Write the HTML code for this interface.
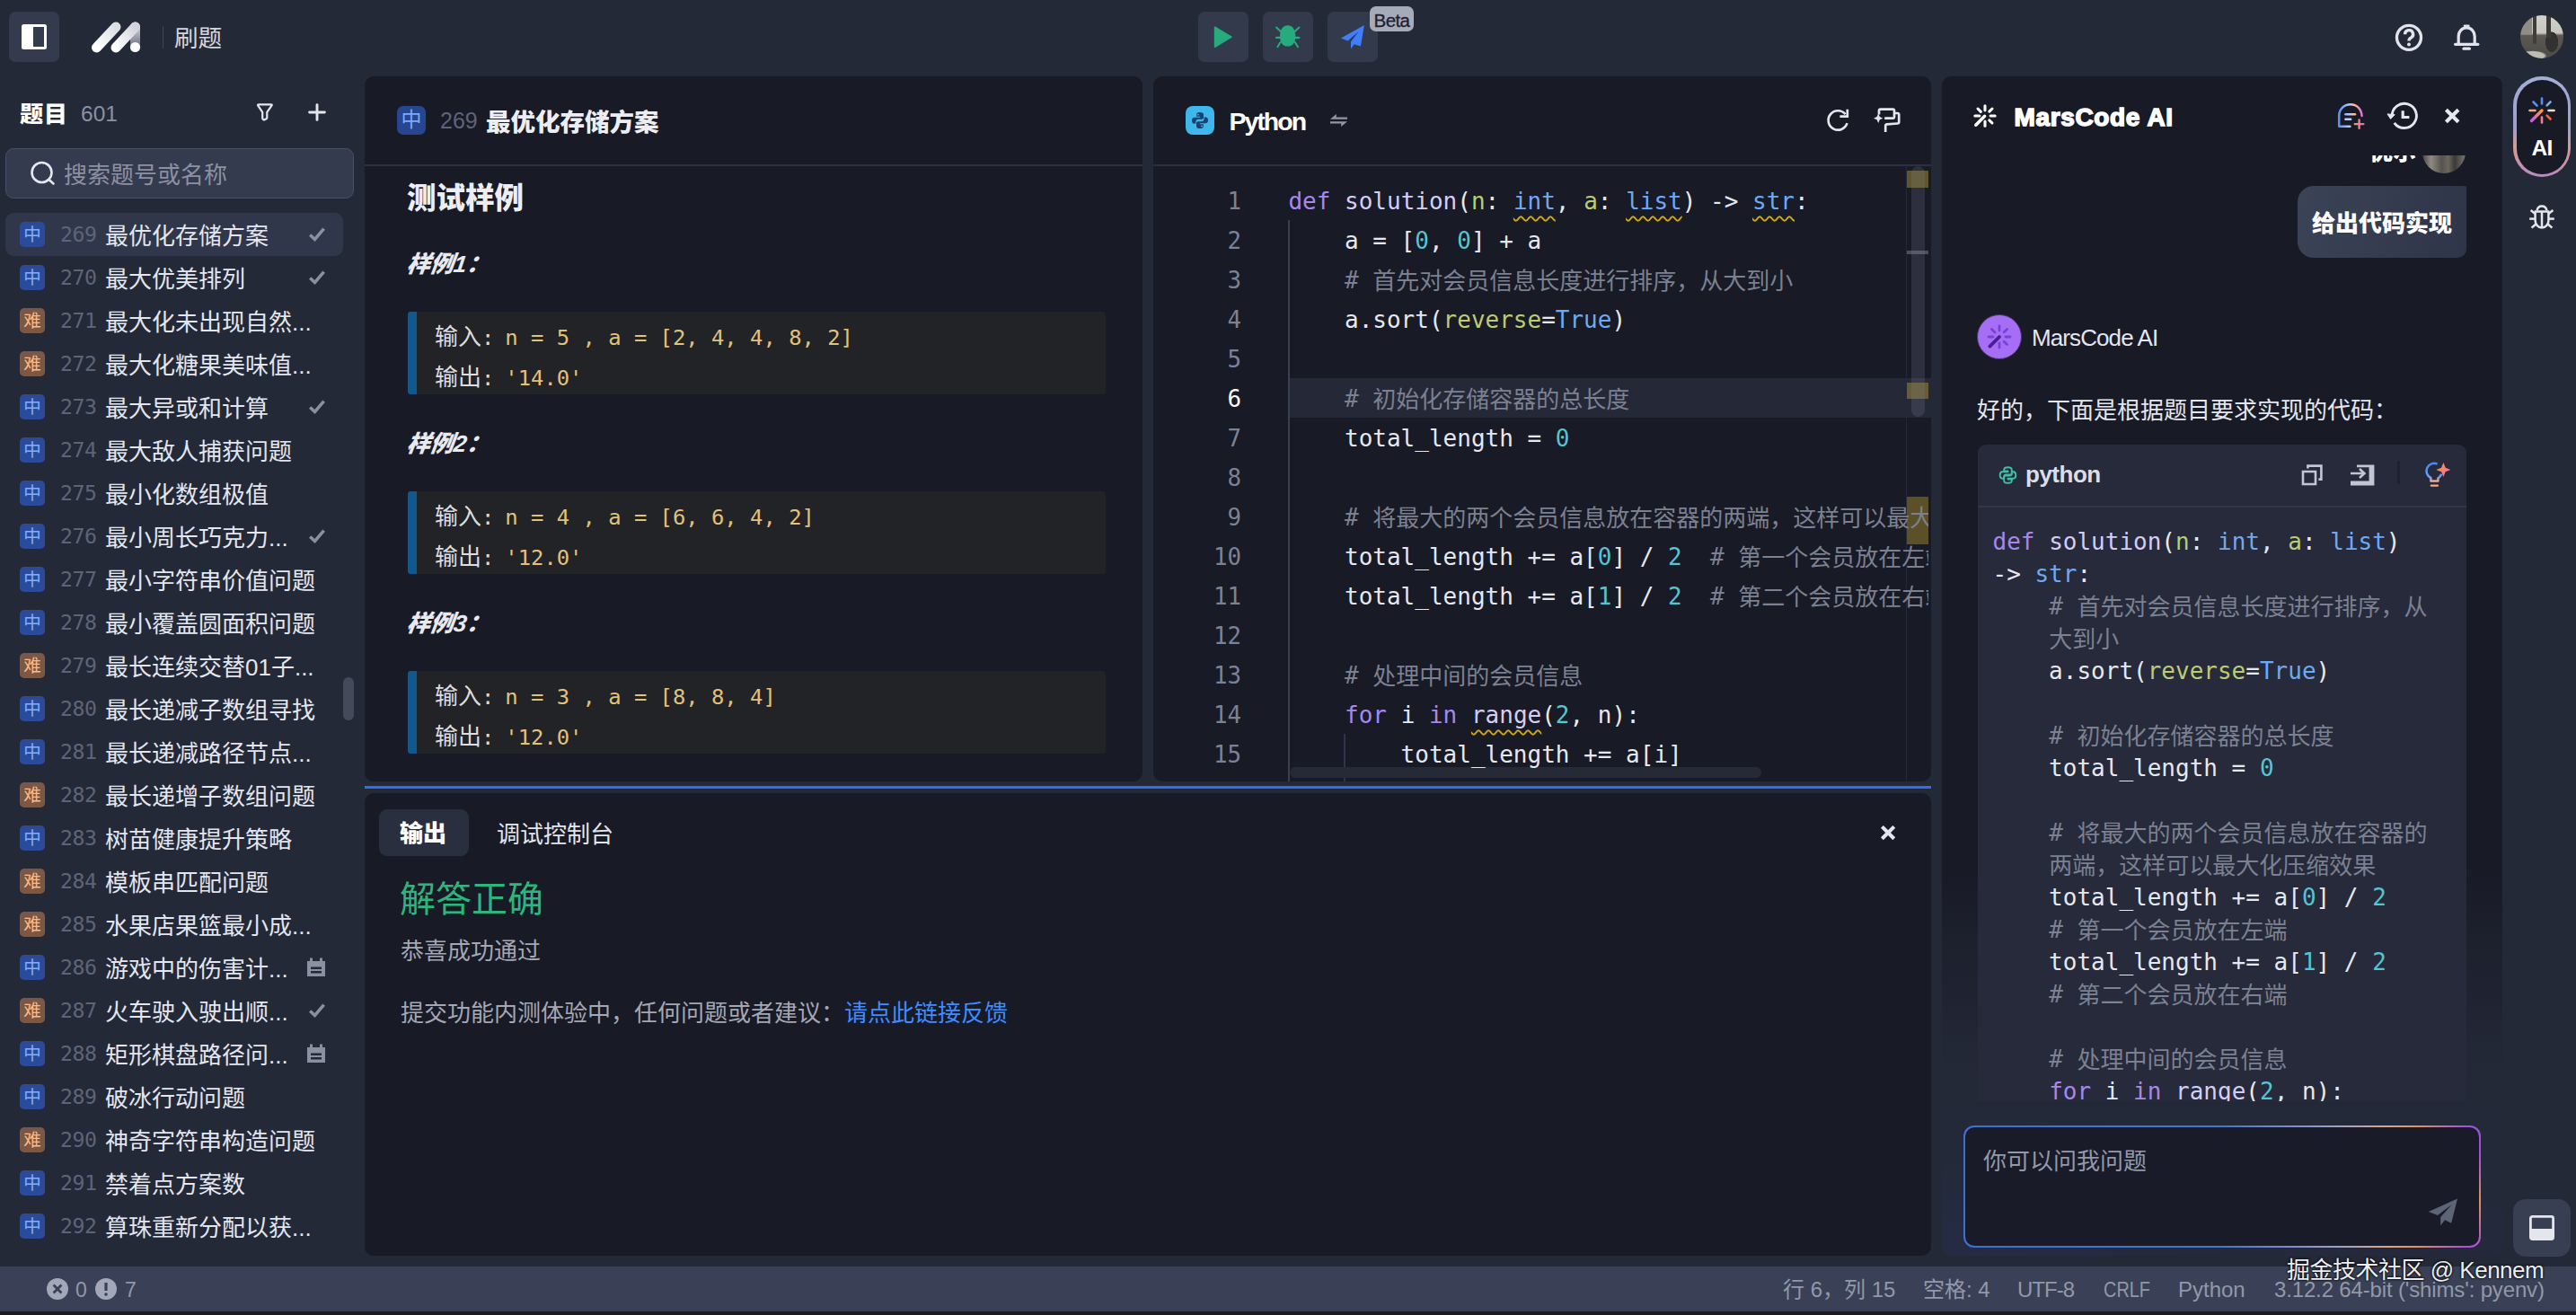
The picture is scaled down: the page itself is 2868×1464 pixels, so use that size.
<!DOCTYPE html>
<html lang="zh-CN">
<head>
<meta charset="utf-8">
<title>MarsCode 刷题</title>
<style>
*{box-sizing:border-box;margin:0;padding:0}
html,body{width:2868px;height:1464px;overflow:hidden;background:#242938}
body{position:relative;font-family:"Liberation Sans","Noto Sans CJK SC",sans-serif;color:#e3e6ee;font-size:26px}
.abs{position:absolute}
svg{position:absolute;overflow:visible}
.panel{position:absolute;background:#181a26;border-radius:10px;overflow:hidden}
.btn{position:absolute;width:56px;height:56px;border-radius:7px;background:#323a4c}
/* sidebar */
.row{position:absolute;left:6px;width:376px;height:48px;border-radius:9px}
.row.sel{background:#31374a}
.bd{position:absolute;left:16px;top:10px;width:28px;height:28px;border-radius:5px;font-size:19.5px;line-height:28.5px;text-align:center}
.bm{background:#2b4a99;color:#7fb0ff}
.bh{background:#7b5745;color:#ffb988}
.no{position:absolute;left:61px;top:0;line-height:47px;font-family:"DejaVu Sans Mono","Liberation Mono",monospace;font-size:23.2px;color:#5d6479;letter-spacing:-0.4px}
.tt{position:absolute;left:111px;top:0;line-height:53px;font-size:26px;color:#e3e6ee;white-space:nowrap}
.rk{left:338px;top:16px;width:18px;height:18px}
/* problem */
.sl{position:absolute;left:45px;font-size:26px;font-weight:900;font-style:italic;color:#e8eaf0;line-height:32px;transform:skewX(-8deg);transform-origin:left bottom}
.sb{position:absolute;left:48px;width:777px;height:92px;background:#222326;border-left:10px solid #12578d;border-radius:3px;padding:7px 0 0 20px;font-size:26px;line-height:43.5px;color:#dcdde0;font-family:"DejaVu Sans Mono","Liberation Mono","Noto Sans CJK SC",monospace;white-space:pre}
.sb div{font-size:26px}
.sb .y,.sb .m{font-size:23.85px}
.sb .m{letter-spacing:-1.2px}
.sb .y{color:#e2c17a}
/* editor */
.mono{font-family:"Liberation Mono","Noto Sans CJK SC",monospace}
.ln{position:absolute;left:0;width:98px;text-align:right;height:44px;line-height:44px;font-size:25.8px;color:#7b8295;font-family:"DejaVu Sans Mono","Liberation Mono",monospace}
.ln.cur{color:#ffffff}
.cl{position:absolute;left:150.4px;height:44px;line-height:44px;font-size:26px;white-space:pre;color:#e6e8ef;font-family:"DejaVu Sans Mono","Liberation Mono","Noto Sans CJK SC",monospace}
.al{position:absolute;left:56.5px;height:36px;line-height:36px;font-size:26px;white-space:pre;color:#e6e8ef;font-family:"DejaVu Sans Mono","Liberation Mono","Noto Sans CJK SC",monospace}
.k{color:#a688ee}.f{color:#d6cdf7}.p{color:#bccb74}.t{color:#6fa9f3}.n{color:#55c4d3}.c{color:#7b8191}
.cj{font-size:26px;position:relative;top:1.4px}
.w{text-decoration:underline wavy #cfa90f;text-decoration-thickness:2px;text-underline-offset:7px;text-decoration-skip-ink:none}
.st{position:absolute;top:0;height:50px;line-height:52px;font-size:24px;color:#9198a9;white-space:nowrap}
</style>
</head>
<body>

<!-- ================= TOP BAR ================= -->
<div class="btn" style="left:10px;top:13px;background:#343b4e"></div>
<svg style="left:24px;top:27px" width="28" height="28" viewBox="0 0 28 28"><rect x="0" y="0" width="28" height="28" rx="2.5" fill="#ffffff"/><rect x="13" y="3" width="12" height="22" fill="#343b4e"/></svg>
<svg style="left:100px;top:22px" width="60" height="40" viewBox="100 22 60 40">
<defs>
<linearGradient id="lg1" x1="0" y1="1" x2="1" y2="0"><stop offset="0" stop-color="#ffffff"/><stop offset="1" stop-color="#dcdee4"/></linearGradient>
<linearGradient id="lg2" x1="0" y1="1" x2="1" y2="0"><stop offset="0" stop-color="#ffffff"/><stop offset="1" stop-color="#d2d4db"/></linearGradient>
<linearGradient id="lg3" gradientUnits="userSpaceOnUse" x1="0" y1="26" x2="0" y2="54"><stop offset="0" stop-color="#e2e3e8"/><stop offset="0.35" stop-color="#b4b7c0"/><stop offset="1" stop-color="#666a77"/></linearGradient>
</defs>
<path d="M150.5 30 L150.5 52" stroke="url(#lg3)" stroke-width="11" stroke-linecap="round"/>
<path d="M107.5 53 L129 30" stroke="url(#lg1)" stroke-width="11" stroke-linecap="round"/>
<path d="M129 53 L150.5 30" stroke="url(#lg2)" stroke-width="11" stroke-linecap="round"/>
<circle cx="150.5" cy="52.5" r="5.6" fill="#ffffff"/>
</svg>
<div class="abs" style="left:181px;top:29px;width:1px;height:25px;background:#3e4559"></div>
<div class="abs" style="left:194px;top:23px;line-height:40px;font-size:26.6px;color:#d3d6df">刷题</div>

<div class="btn" style="left:1334px;top:13px"></div>
<div class="btn" style="left:1406px;top:13px"></div>
<div class="btn" style="left:1478px;top:13px"></div>
<svg style="left:1350px;top:28px" width="24" height="26" viewBox="1350 28 24 26"><path d="M1352.6 30.2 L1371 41.1 L1352.6 52.2 Z" fill="#26ab7c" stroke="#26ab7c" stroke-width="1.6" stroke-linejoin="round"/></svg>
<svg style="left:1418px;top:26px" width="32" height="30" viewBox="1418 26 32 30"><g fill="none" stroke="#26ab7c" stroke-width="2.1" stroke-linecap="round"><path d="M1421 30.6 L1427.4 36.6"/><path d="M1446.4 30.6 L1440 36.6"/><path d="M1421 41.9 H1426"/><path d="M1441.4 41.9 H1446.4"/><path d="M1425.6 47 L1422.4 52.2"/><path d="M1441.8 47 L1445 52.2"/></g><path d="M1433.7 28.2 C1429.2 28.2 1426.6 31.4 1425.6 35.6 C1424.6 39.6 1424.8 44 1426.4 47.2 C1427.9 50.2 1430.4 51.6 1433.7 51.6 C1437 51.6 1439.5 50.2 1441 47.2 C1442.6 44 1442.8 39.6 1441.8 35.6 C1440.8 31.4 1438.2 28.2 1433.7 28.2 Z" fill="#26ab7c"/></svg>
<svg style="left:1492px;top:27px" width="28" height="28" viewBox="1492 27 28 28"><path d="M1518.9 27.9 L1493 42.4 L1500.6 45.6 L1512.6 35 L1504 46.6 L1504 54.4 L1507.6 49.3 L1514.9 51.4 Z" fill="#3f7fff"/></svg>
<div class="abs" style="left:1525px;top:7px;width:49px;height:28px;border-radius:7px;background:#a7abb8;color:#1c2030;font-size:20.5px;line-height:31px;text-align:center;letter-spacing:-0.6px;-webkit-text-stroke:0.3px #1c2030">Beta</div>
<svg style="left:2660px;top:20px" width="110" height="44" viewBox="2660 20 110 44"><g fill="none" stroke="#e2e4ec" stroke-linecap="round" stroke-linejoin="round">
<circle cx="2682" cy="41.8" r="13.5" stroke-width="3.3"/>
<path d="M2677.6 38.2 A4.5 4.5 0 1 1 2684 42.2 Q2682 43.2 2682 45.4" stroke-width="3.4" stroke-linecap="butt"/>
<path d="M2737.2 49.3 V40.4 A9 9.6 0 0 1 2755.2 40.4 V49.3" stroke-width="3.2" stroke-linecap="butt"/>
<path d="M2733.6 49.3 H2758.8" stroke-width="3.2"/>
<path d="M2744 28.8 H2748.4" stroke-width="2.6"/>
<path d="M2743 54.2 H2749.4" stroke-width="3.2"/>
</g><circle cx="2682" cy="49.6" r="2" fill="#e2e4ec"/></svg>
<div class="abs" style="left:2806px;top:17px;width:48px;height:48px;border-radius:50%;overflow:hidden;background:
linear-gradient(90deg,rgba(0,0,0,0) 29%,#403e3a 29%,#403e3a 38%,rgba(0,0,0,0) 38%) 0 0/100% 66% no-repeat,
linear-gradient(90deg,rgba(0,0,0,0) 61%,#3b3936 61%,#3b3936 70%,rgba(0,0,0,0) 70%) 0 0/100% 52% no-repeat,
radial-gradient(ellipse 15% 24% at 73% 62%,#343230 0,#343230 96%,rgba(0,0,0,0) 100%),
radial-gradient(ellipse 34% 12% at 28% 94%,#bdbdb5 0,#bdbdb5 80%,rgba(0,0,0,0) 100%),
linear-gradient(90deg,#8f8d86 0,#8f8d86 27%,rgba(0,0,0,0) 27%) 0 0/100% 44% no-repeat,
linear-gradient(180deg,#d2d2ca 0%,#c6c6be 41%,#5c5953 47%,#4c4a45 100%)"></div>

<!-- ================= SIDEBAR ================= -->
<div class="abs" style="left:22px;top:108px;line-height:38px;font-size:25px;font-weight:900;color:#ffffff;letter-spacing:0.4px;transform:scaleX(1.05);transform-origin:left center">题目</div>
<div class="abs" style="left:90px;top:108px;line-height:38px;font-size:24.5px;color:#8b91a2">601</div>
<svg style="left:285px;top:114px" width="20" height="21" viewBox="0 0 20 21"><path d="M3 2.3 H16.8 Q18.4 2.3 17.4 3.7 L12.3 10.8 V17 Q12.3 17.8 11.6 18.2 L9.6 19.3 Q8.8 19.7 8.2 19.1 L7.6 18.5 Q7.2 18.1 7.2 17.4 V10.8 L2.3 3.7 Q1.4 2.3 3 2.3 Z" fill="none" stroke="#e4e6ee" stroke-width="2.2" stroke-linejoin="round"/></svg>
<svg style="left:343px;top:115px" width="20" height="20" viewBox="0 0 20 20"><path d="M10 1.6 V18.4 M1.6 10 H18.4" stroke="#e4e6ee" stroke-width="2.9" stroke-linecap="round"/></svg>
<div class="abs" style="left:6px;top:165px;width:388px;height:56px;border-radius:9px;background:#343b4f;border:1px solid #474f66"></div>
<svg style="left:33px;top:178px" width="30" height="30" viewBox="0 0 30 30"><circle cx="13.5" cy="14" r="11" fill="none" stroke="#e6e8ef" stroke-width="2.6"/><path d="M21.5 22 L26.5 26.5" stroke="#e6e8ef" stroke-width="2.6" stroke-linecap="round"/></svg>
<div class="abs" style="left:71px;top:174px;line-height:42px;font-size:26px;color:#8b91a2">搜索题号或名称</div>
<div class="row sel" style="top:237px"><span class="bd bm">中</span><span class="no">269</span><span class="tt">最优化存储方案</span><svg class="rk" viewBox="0 0 18 18"><path d="M1.2 8.4 L6.5 13.4 L16.6 1.6" fill="none" stroke="#8a90a0" stroke-width="3.5" stroke-linecap="butt" stroke-linejoin="miter"/></svg></div>
<div class="row" style="top:285px"><span class="bd bm">中</span><span class="no">270</span><span class="tt">最大优美排列</span><svg class="rk" viewBox="0 0 18 18"><path d="M1.2 8.4 L6.5 13.4 L16.6 1.6" fill="none" stroke="#8a90a0" stroke-width="3.5" stroke-linecap="butt" stroke-linejoin="miter"/></svg></div>
<div class="row" style="top:333px"><span class="bd bh">难</span><span class="no">271</span><span class="tt">最大化未出现自然...</span></div>
<div class="row" style="top:381px"><span class="bd bh">难</span><span class="no">272</span><span class="tt">最大化糖果美味值...</span></div>
<div class="row" style="top:429px"><span class="bd bm">中</span><span class="no">273</span><span class="tt">最大异或和计算</span><svg class="rk" viewBox="0 0 18 18"><path d="M1.2 8.4 L6.5 13.4 L16.6 1.6" fill="none" stroke="#8a90a0" stroke-width="3.5" stroke-linecap="butt" stroke-linejoin="miter"/></svg></div>
<div class="row" style="top:477px"><span class="bd bm">中</span><span class="no">274</span><span class="tt">最大敌人捕获问题</span></div>
<div class="row" style="top:525px"><span class="bd bm">中</span><span class="no">275</span><span class="tt">最小化数组极值</span></div>
<div class="row" style="top:573px"><span class="bd bm">中</span><span class="no">276</span><span class="tt">最小周长巧克力...</span><svg class="rk" viewBox="0 0 18 18"><path d="M1.2 8.4 L6.5 13.4 L16.6 1.6" fill="none" stroke="#8a90a0" stroke-width="3.5" stroke-linecap="butt" stroke-linejoin="miter"/></svg></div>
<div class="row" style="top:621px"><span class="bd bm">中</span><span class="no">277</span><span class="tt">最小字符串价值问题</span></div>
<div class="row" style="top:669px"><span class="bd bm">中</span><span class="no">278</span><span class="tt">最小覆盖圆面积问题</span></div>
<div class="row" style="top:717px"><span class="bd bh">难</span><span class="no">279</span><span class="tt">最长连续交替01子...</span></div>
<div class="row" style="top:765px"><span class="bd bm">中</span><span class="no">280</span><span class="tt">最长递减子数组寻找</span></div>
<div class="row" style="top:813px"><span class="bd bm">中</span><span class="no">281</span><span class="tt">最长递减路径节点...</span></div>
<div class="row" style="top:861px"><span class="bd bh">难</span><span class="no">282</span><span class="tt">最长递增子数组问题</span></div>
<div class="row" style="top:909px"><span class="bd bm">中</span><span class="no">283</span><span class="tt">树苗健康提升策略</span></div>
<div class="row" style="top:957px"><span class="bd bh">难</span><span class="no">284</span><span class="tt">模板串匹配问题</span></div>
<div class="row" style="top:1005px"><span class="bd bh">难</span><span class="no">285</span><span class="tt">水果店果篮最小成...</span></div>
<div class="row" style="top:1053px"><span class="bd bm">中</span><span class="no">286</span><span class="tt">游戏中的伤害计...</span><svg class="rk" style="left:335px;width:22px;height:22px;top:13px" viewBox="0 0 22 22"><path d="M1 4 h20 v17 h-20z M5 10.5 h12 v2.6 h-12z M5 15 h12 v2.6 h-12z" fill="#8a90a0" fill-rule="evenodd"/><rect x="4" y="0.5" width="3" height="4" fill="#8a90a0"/><rect x="15" y="0.5" width="3" height="4" fill="#8a90a0"/></svg></div>
<div class="row" style="top:1101px"><span class="bd bh">难</span><span class="no">287</span><span class="tt">火车驶入驶出顺...</span><svg class="rk" viewBox="0 0 18 18"><path d="M1.2 8.4 L6.5 13.4 L16.6 1.6" fill="none" stroke="#8a90a0" stroke-width="3.5" stroke-linecap="butt" stroke-linejoin="miter"/></svg></div>
<div class="row" style="top:1149px"><span class="bd bm">中</span><span class="no">288</span><span class="tt">矩形棋盘路径问...</span><svg class="rk" style="left:335px;width:22px;height:22px;top:13px" viewBox="0 0 22 22"><path d="M1 4 h20 v17 h-20z M5 10.5 h12 v2.6 h-12z M5 15 h12 v2.6 h-12z" fill="#8a90a0" fill-rule="evenodd"/><rect x="4" y="0.5" width="3" height="4" fill="#8a90a0"/><rect x="15" y="0.5" width="3" height="4" fill="#8a90a0"/></svg></div>
<div class="row" style="top:1197px"><span class="bd bm">中</span><span class="no">289</span><span class="tt">破冰行动问题</span></div>
<div class="row" style="top:1245px"><span class="bd bh">难</span><span class="no">290</span><span class="tt">神奇字符串构造问题</span></div>
<div class="row" style="top:1293px"><span class="bd bm">中</span><span class="no">291</span><span class="tt">禁着点方案数</span></div>
<div class="row" style="top:1341px"><span class="bd bm">中</span><span class="no">292</span><span class="tt">算珠重新分配以获...</span></div>
<div class="abs" style="left:382px;top:754px;width:12px;height:48px;border-radius:6px;background:#444a5a"></div>

<!-- ================= PROBLEM PANEL ================= -->
<div class="panel" style="left:406px;top:85px;width:866px;height:785px">
  <div class="abs" style="left:36px;top:33px;width:32px;height:32px;border-radius:7px;background:#27468f;color:#78aaff;font-size:23px;line-height:31px;text-align:center">中</div>
  <div class="abs" style="left:84px;top:28px;line-height:42px;font-size:25px;color:#5d6479">269</div>
  <div class="abs" style="left:135px;top:31px;line-height:42px;font-size:27.5px;font-weight:900;color:#eceef3">最优化存储方案</div>
  <div class="abs" style="left:0;top:98px;width:866px;height:2px;background:#2b3040"></div>
  <div class="abs" style="left:47px;top:111px;line-height:50px;font-size:32.5px;font-weight:900;color:#eceef3">测试样例</div>
  <div class="sl" style="top:193px">样例1：</div><div class="sb" style="top:262px"><div>输入<span class="m">: </span><span class="y">n = 5 , a = [2, 4, 4, 8, 2]</span></div><div>输出<span class="m">: </span><span class="y">'14.0'</span></div></div><div class="sl" style="top:393px">样例2：</div><div class="sb" style="top:462px"><div>输入<span class="m">: </span><span class="y">n = 4 , a = [6, 6, 4, 2]</span></div><div>输出<span class="m">: </span><span class="y">'12.0'</span></div></div><div class="sl" style="top:593px">样例3：</div><div class="sb" style="top:662px"><div>输入<span class="m">: </span><span class="y">n = 3 , a = [8, 8, 4]</span></div><div>输出<span class="m">: </span><span class="y">'12.0'</span></div></div>
</div>

<!-- ================= EDITOR PANEL ================= -->
<div class="panel" style="left:1284px;top:85px;width:866px;height:785px">
  <div class="abs" style="left:36px;top:33px;width:32px;height:32px;border-radius:8px;background:#3fb6ec"></div>
  <svg style="left:42px;top:39px" width="20" height="20" viewBox="0 0 20 20"><path d="M9.8 1 C6.6 1 6.2 2.4 6.2 3.6 V5.8 H10.2 V6.8 H3.8 C2 6.8 1 8.2 1 10.2 C1 12.4 2 13.6 3.6 13.6 H5.4 V11.4 C5.4 9.8 6.6 8.8 8 8.8 H12 C13.2 8.8 14 8 14 6.8 V3.6 C14 2 12.6 1 9.8 1 Z" fill="#1b416e"/><path d="M10.2 19 C13.4 19 13.8 17.6 13.8 16.4 V14.2 H9.8 V13.2 H16.2 C18 13.2 19 11.8 19 9.8 C19 7.6 18 6.4 16.4 6.4 H14.6 V8.6 C14.6 10.2 13.4 11.2 12 11.2 H8 C6.8 11.2 6 12 6 13.2 V16.4 C6 18 7.4 19 10.2 19 Z" fill="#1b416e"/><circle cx="8" cy="3.6" r="0.9" fill="#3fb6ec"/><circle cx="12" cy="16.4" r="0.9" fill="#3fb6ec"/></svg>
  <div class="abs" style="left:84.5px;top:29px;line-height:42px;font-size:28.5px;font-weight:700;color:#ffffff;letter-spacing:-2px">Python</div>
  <svg style="left:197px;top:42px" width="19" height="14" viewBox="0 0 19 14"><path d="M0 5.8 L6.8 0 V3.4 H19 V5.8 Z M19 8.2 L12.2 14 V10.6 H0 V8.2 Z" fill="#9196a6"/></svg>
  <svg style="left:0;top:0" width="866" height="98" viewBox="1284 85 866 98"><g fill="none" stroke="#e4e6ec" stroke-width="2.7">
  <path d="M2054.6 127.2 A10.7 10.7 0 1 0 2056.5 137.2"/>
  <path d="M2056.8 121.8 V129.7 H2048.4"/>
  <path d="M2092 127.4 V123.2 Q2092 121.6 2093.6 121.6 H2107.4 Q2109 121.6 2109 123.2 V130 Q2109 131.6 2107.4 131.6 H2098.2"/>
  <path d="M2109 126 H2112.6 Q2114.2 126 2114.2 127.6 V136 Q2114.2 137.4 2112.6 137.5 L2100.8 138.4 Q2099.2 138.6 2099.2 140.2 V147"/>
  </g><path d="M2091.2 126.4 L2092.8 130.1 L2096.4 131.7 L2092.8 133.3 L2091.2 137 L2089.6 133.3 L2086 131.7 L2089.6 130.1 Z" fill="#e4e6ec"/></svg>
  <div class="abs" style="left:0;top:98px;width:866px;height:2px;background:#2b3040"></div>
  <div class="abs" style="left:151px;top:336px;width:715px;height:44px;background:#252837"></div>
  <div class="abs" style="left:150px;top:160px;width:2px;height:625px;background:#3b4051"></div>
  <div class="abs" style="left:212px;top:732px;width:2px;height:53px;background:#30344a"></div>
  <div class="abs" style="left:0;top:100px;width:863px;height:685px;overflow:hidden;z-index:2">
  <div class="abs" style="left:0;top:-184px;width:866px;height:900px">
  <div class="ln" style="top:201px">1</div><div class="cl" style="top:201px"><span class="k">def</span> <span class="f">solution</span>(<span class="p">n</span>: <span class="w"><span class="t">int</span></span>, <span class="p">a</span>: <span class="w"><span class="t">list</span></span>) -&gt; <span class="w"><span class="t">str</span></span>:</div>
<div class="ln" style="top:245px">2</div><div class="cl" style="top:245px">    a = [<span class="n">0</span>, <span class="n">0</span>] + a</div>
<div class="ln" style="top:289px">3</div><div class="cl" style="top:289px">    <span class="c"># <span class="cj">首先对会员信息长度进行排序，从大到小</span></span></div>
<div class="ln" style="top:333px">4</div><div class="cl" style="top:333px">    a.sort(<span class="p">reverse</span>=<span class="t">True</span>)</div>
<div class="ln" style="top:377px">5</div><div class="cl" style="top:377px"></div>
<div class="ln cur" style="top:421px">6</div><div class="cl" style="top:421px">    <span class="c"># <span class="cj">初始化存储容器的总长度</span></span></div>
<div class="ln" style="top:465px">7</div><div class="cl" style="top:465px">    total_length = <span class="n">0</span></div>
<div class="ln" style="top:509px">8</div><div class="cl" style="top:509px"></div>
<div class="ln" style="top:553px">9</div><div class="cl" style="top:553px">    <span class="c"># <span class="cj">将最大的两个会员信息放在容器的两端，这样可以最大化压缩效果</span></span></div>
<div class="ln" style="top:597px">10</div><div class="cl" style="top:597px">    total_length += a[<span class="n">0</span>] / <span class="n">2</span>  <span class="c"># <span class="cj">第一个会员放在左端</span></span></div>
<div class="ln" style="top:641px">11</div><div class="cl" style="top:641px">    total_length += a[<span class="n">1</span>] / <span class="n">2</span>  <span class="c"># <span class="cj">第二个会员放在右端</span></span></div>
<div class="ln" style="top:685px">12</div><div class="cl" style="top:685px"></div>
<div class="ln" style="top:729px">13</div><div class="cl" style="top:729px">    <span class="c"># <span class="cj">处理中间的会员信息</span></span></div>
<div class="ln" style="top:773px">14</div><div class="cl" style="top:773px">    <span class="k">for</span> i <span class="k">in</span> <span class="w"><span class="f">range</span></span>(<span class="n">2</span>, n):</div>
<div class="ln" style="top:817px">15</div><div class="cl" style="top:817px">        total_length += a[i]</div>
  </div></div>
    <div class="abs" style="left:838px;top:100px;width:1px;height:685px;background:#252836"></div>
  <div class="abs" style="left:839px;top:105px;width:24px;height:18.5px;background:rgba(165,140,48,.52)"></div>
  <div class="abs" style="left:839px;top:194px;width:24px;height:4px;background:#4b4f5c"></div>
  <div class="abs" style="left:839px;top:341px;width:24px;height:17.5px;background:rgba(165,140,48,.52)"></div>
  <div class="abs" style="left:839px;top:468px;width:24px;height:52.5px;background:rgba(160,134,44,.5)"></div>
  <div class="abs" style="left:843.5px;top:100px;width:15px;height:279px;background:rgba(130,136,160,.2);border-radius:7.5px"></div>
  <div class="abs" style="left:152px;top:769px;width:525px;height:12px;border-radius:6px;background:#262936"></div>
</div>

<!-- blue splitter -->
<div class="abs" style="left:406px;top:875px;width:1744px;height:3px;background:#2f6fed"></div>

<!-- ================= OUTPUT PANEL ================= -->
<div class="panel" style="left:406px;top:883px;width:1744px;height:515px">
  <div class="abs" style="left:16px;top:18px;width:100px;height:52px;border-radius:9px;background:#2a2f40"></div>
  <div class="abs" style="left:39px;top:24px;line-height:42px;font-size:26px;font-weight:900;color:#ffffff">输出</div>
  <div class="abs" style="left:147px;top:24.5px;line-height:42px;font-size:26px;color:#e3e6ee">调试控制台</div>
  <div class="abs" style="left:39px;top:87.5px;line-height:60px;font-size:40px;color:#2cb67e">解答正确</div>
  <div class="abs" style="left:40px;top:155px;line-height:42px;font-size:26px;color:#a3a8b4">恭喜成功通过</div>
  <div class="abs" style="left:40px;top:224px;line-height:42px;font-size:26px;color:#a3a8b4;white-space:nowrap">提交功能内测体验中，任何问题或者建议：<span style="color:#3f8cff">请点此链接反馈</span></div>
  <svg style="left:1687px;top:35.2px" width="18" height="18" viewBox="0 0 18 18"><path d="M2.4 2.4 L15.8 15.8 M15.8 2.4 L2.4 15.8" stroke="#e4e6ee" stroke-width="4.1" stroke-linecap="butt"/></svg>
</div>

<!-- ================= AI PANEL ================= -->
<div class="panel" style="left:2162px;top:85px;width:624px;height:1313px">
  <svg style="left:35px;top:30.8px" width="26" height="26" viewBox="0 0 28 28"><g stroke="#ffffff" stroke-width="3.3" stroke-linecap="round"><path d="M3 25 L13.6 14.4" stroke-width="3.8"/><path d="M14 2 V7.4"/><path d="M5.4 5.4 L9 9"/><path d="M22.6 5.4 L19.2 8.8"/><path d="M2 14 H7.4"/><path d="M20.6 14 H26"/><path d="M19.2 19.2 L22.6 22.6"/><path d="M14 20.6 V26"/></g></svg>
  <div class="abs" style="left:80.5px;top:24.5px;line-height:42px;font-size:28px;font-weight:700;color:#ffffff;-webkit-text-stroke:1.5px #ffffff;letter-spacing:0.65px">MarsCode AI</div>
  <svg style="left:0;top:0" width="624" height="86" viewBox="2162 85 624 86">
  <defs><linearGradient id="nc" gradientUnits="userSpaceOnUse" x1="2603" y1="0" x2="2631" y2="0"><stop offset="0" stop-color="#4f8ef7"/><stop offset="0.42" stop-color="#a9c9ff"/><stop offset="0.62" stop-color="#ffc08c"/><stop offset="1" stop-color="#e066e0"/></linearGradient>
  <linearGradient id="ncp" gradientUnits="userSpaceOnUse" x1="2621" y1="0" x2="2632" y2="0"><stop offset="0" stop-color="#ff9a4a"/><stop offset="1" stop-color="#e066d0"/></linearGradient></defs>
  <g fill="none" stroke-linecap="round" stroke-linejoin="round">
  <path d="M2629.6 129 C2629.2 121.6 2624.2 116.2 2617 116.2 C2609.6 116.2 2604.2 121.6 2604.2 128.6 V140.8 H2616.4" stroke="url(#nc)" stroke-width="2.5"/>
  <path d="M2611.4 127.2 H2622" stroke="url(#nc)" stroke-width="2.5"/>
  <path d="M2611.4 132.8 H2617.2" stroke="#b7cdfb" stroke-width="2.5"/>
  <path d="M2626.6 133.4 V142.8 M2621.8 138.1 H2631.4" stroke="url(#ncp)" stroke-width="2.4"/>
  <path d="M2663.2 129.4 A13.6 13.6 0 1 1 2665.7 136.8" stroke="#e4e6ec" stroke-width="2.9" stroke-linecap="butt"/>
  <path d="M2675.2 123.2 V130.5 H2682.4" stroke="#e4e6ec" stroke-width="3.2" stroke-linecap="butt" stroke-linejoin="miter"/>
  <path d="M2723.4 122.2 L2737 135.8 M2737 122.2 L2723.4 135.8" stroke="#e6e8ee" stroke-width="4.1" stroke-linecap="butt"/>
  </g>
  <path d="M2658 126.9 L2666.2 127.7 L2661.6 132.4 Z" fill="#e4e6ec" stroke="#e4e6ec" stroke-width="1" stroke-linejoin="round"/>
  </svg>
  <div class="abs" style="left:0;top:88px;width:624px;height:1225px;overflow:hidden">
  <div class="abs" style="left:476px;top:-24px;line-height:40px;font-size:26px;font-weight:900;color:#ffffff">优尔</div>
  <div class="abs" style="left:535px;top:-28px;width:48px;height:48px;border-radius:50%;overflow:hidden;background:linear-gradient(90deg,#4a4743 0,#8e8a82 20%,#56534e 45%,#6b675f 60%,#3c3a37 75%,#7a766f 100%)"></div>
  </div>
  <div class="abs" style="left:396px;top:122px;width:188px;height:80px;border-radius:18px 2px 10px 18px;background:linear-gradient(100deg,#3b4357 0%,#353c50 50%,#2f3548 100%)"></div>
  <div class="abs" style="left:412px;top:143px;line-height:42px;font-size:26px;font-weight:900;color:#ffffff;white-space:nowrap">给出代码实现</div>
  <div class="abs" style="left:39px;top:265px;width:50px;height:50px;border-radius:50%;background:#a56ef4;border:1.5px solid #4a3470"></div>
  <svg style="left:50px;top:276px" width="28" height="28" viewBox="0 0 28 28"><path d="M3.4 24.6 L14 14" stroke="#4a1f96" stroke-width="3.8" stroke-linecap="round"/><g stroke="#7a42d4" stroke-width="2.8" stroke-linecap="round"><path d="M14 2 V7"/><path d="M5.4 5.4 L9 9"/><path d="M22.6 5.4 L19.2 8.8"/><path d="M2 14 H7"/><path d="M21 14 H26"/><path d="M19.2 19.2 L22.6 22.6"/><path d="M14 21 V26"/></g></svg>
  <div class="abs" style="left:100px;top:270px;line-height:42px;font-size:26px;color:#e3e6ee;letter-spacing:-0.9px">MarsCode AI</div>
  <div class="abs" style="left:39px;top:351px;line-height:42px;font-size:26px;color:#e3e6ee;white-space:nowrap">好的，下面是根据题目要求实现的代码：</div>
  <div class="abs" style="left:0;top:880px;width:624px;height:433px;background:linear-gradient(180deg,rgba(36,41,56,0) 0%,rgba(36,41,56,.5) 25%,rgba(36,41,56,.92) 50%,rgba(36,41,57,1) 70%,rgba(37,41,60,1) 100%)"></div>
  <div class="abs" style="left:0;top:1130px;width:624px;height:183px;background:radial-gradient(ellipse 60% 90% at 10% 100%,rgba(40,52,100,.22),rgba(40,52,100,0) 70%)"></div>
  <div class="abs" style="left:40px;top:410px;width:544px;height:731px;overflow:hidden">
   <div class="abs" style="left:0;top:0;width:544px;height:760px;border-radius:9px;background:#262a3b"></div>
   <div class="abs" style="left:0;top:68px;width:544px;height:2px;background:#30354a"></div>
  </div>
  <svg style="left:63px;top:434px" width="21" height="20" viewBox="0 0 20 20"><g fill="none" stroke="#3dbfa8" stroke-width="1.9" stroke-linejoin="round"><path id="pyh" d="M13.4 9.5 H8.2 C6.6 9.5 5.7 10.5 5.7 12 V13.7 H3.8 C2.2 13.7 1.2 12.4 1.2 10 C1.2 7.6 2.2 6.3 3.8 6.3 H10 V5.5 H5.7 V3.8 C5.7 2.1 7.1 1.2 10 1.2 C12.9 1.2 14.3 2.1 14.3 3.8 V7.9 C14.3 8.9 13.9 9.5 13.4 9.5 Z"/><path d="M13.4 9.5 H8.2 C6.6 9.5 5.7 10.5 5.7 12 V13.7 H3.8 C2.2 13.7 1.2 12.4 1.2 10 C1.2 7.6 2.2 6.3 3.8 6.3 H10 V5.5 H5.7 V3.8 C5.7 2.1 7.1 1.2 10 1.2 C12.9 1.2 14.3 2.1 14.3 3.8 V7.9 C14.3 8.9 13.9 9.5 13.4 9.5 Z" transform="rotate(180 10 10)"/></g></svg>
  <div class="abs" style="left:93px;top:422px;line-height:42px;font-size:26px;font-weight:700;color:#dcdee7;letter-spacing:-0.5px">python</div>
  <svg style="left:400px;top:431.5px" width="24" height="24" viewBox="0 0 24 24"><path d="M2 8 H16 V22 H2 Z" fill="none" stroke="#c3c6d2" stroke-width="2.6"/><path d="M7.4 4.6 V1.6 H22.4 V16.6 H19.4" fill="none" stroke="#c3c6d2" stroke-width="2.6"/></svg>
  <svg style="left:454px;top:431.5px" width="28" height="24" viewBox="0 0 28 24"><path d="M8 0.4 H27.4 V23.4 H1 V18.4 H21.6 V3.2 H8 Z" fill="#c3c6d2"/><path d="M1 10 H15.4 M11 5 L16.4 10 L11 15" fill="none" stroke="#c3c6d2" stroke-width="2.6"/></svg>
  <div class="abs" style="left:506.5px;top:428px;width:3px;height:26px;border-radius:2px;background:#1e2130"></div>
  <svg style="left:538px;top:428px" width="28" height="32" viewBox="0 0 28 32">
   <defs><linearGradient id="bulb" x1="0" y1="0" x2="0" y2="1"><stop offset="0" stop-color="#3f8cff"/><stop offset="0.75" stop-color="#6aa0f5"/><stop offset="1" stop-color="#f0a890"/></linearGradient>
   <linearGradient id="spk" x1="0" y1="0" x2="1" y2="1"><stop offset="0" stop-color="#ff9a3c"/><stop offset="1" stop-color="#f06aa8"/></linearGradient></defs>
   <path d="M13.6 3.6 A8.4 8.4 0 1 0 6.4 19 V22.6 H14.4 V19.4 C16 18.4 17.4 16.8 18.2 14.8" fill="none" stroke="url(#bulb)" stroke-width="2.5" stroke-linejoin="round"/>
   <path d="M6.8 27.6 H14" stroke="#f0a890" stroke-width="2.3" stroke-linecap="round"/>
   <path d="M20.4 2 L22.7 7.7 L28.4 10 L22.7 12.3 L20.4 18 L18.1 12.3 L12.4 10 L18.1 7.7 Z" fill="url(#spk)"/>
  </svg>
  <div class="abs" style="left:0;top:0;width:624px;height:1141px;overflow:hidden">
  <div class="al" style="top:500px"><span class="k">def</span> <span class="f">solution</span>(<span class="p">n</span>: <span class="t">int</span>, <span class="p">a</span>: <span class="t">list</span>)</div>
<div class="al" style="top:536px">-&gt; <span class="t">str</span>:</div>
<div class="al" style="top:572px">    <span class="c"># <span class="cj">首先对会员信息长度进行排序，从</span></span></div>
<div class="al" style="top:608px">    <span class="c"><span class="cj">大到小</span></span></div>
<div class="al" style="top:644px">    a.sort(<span class="p">reverse</span>=<span class="t">True</span>)</div>
<div class="al" style="top:680px"></div>
<div class="al" style="top:716px">    <span class="c"># <span class="cj">初始化存储容器的总长度</span></span></div>
<div class="al" style="top:752px">    total_length = <span class="n">0</span></div>
<div class="al" style="top:788px"></div>
<div class="al" style="top:824px">    <span class="c"># <span class="cj">将最大的两个会员信息放在容器的</span></span></div>
<div class="al" style="top:860px">    <span class="c"><span class="cj">两端，这样可以最大化压缩效果</span></span></div>
<div class="al" style="top:896px">    total_length += a[<span class="n">0</span>] / <span class="n">2</span></div>
<div class="al" style="top:932px">    <span class="c"># <span class="cj">第一个会员放在左端</span></span></div>
<div class="al" style="top:968px">    total_length += a[<span class="n">1</span>] / <span class="n">2</span></div>
<div class="al" style="top:1004px">    <span class="c"># <span class="cj">第二个会员放在右端</span></span></div>
<div class="al" style="top:1040px"></div>
<div class="al" style="top:1076px">    <span class="c"># <span class="cj">处理中间的会员信息</span></span></div>
<div class="al" style="top:1112px">    <span class="k">for</span> i <span class="k">in</span> <span class="f">range</span>(<span class="n">2</span>, n):</div>
  </div>
  
  <div class="abs" style="left:24px;top:1168px;width:576px;height:136px;border-radius:12px;background:radial-gradient(circle 55px at 100% 62%,#e0905e 0,rgba(224,144,94,0) 100%),linear-gradient(90deg,#3d6fd2 0%,#4a74cc 50%,#9aa0c8 72%,#d9a58a 82%,#e0905e 88%,#a552de 97%,#a04fe0 100%)"></div>
  <div class="abs" style="left:25.6px;top:1169.6px;width:572.8px;height:132.8px;border-radius:10.5px;background:#191b29"></div>
  <div class="abs" style="left:46px;top:1187px;line-height:42px;font-size:26px;color:#9399a8;white-space:nowrap">你可以问我问题</div>
  <svg style="left:541px;top:1249px" width="34" height="32" viewBox="0 0 34 32"><path d="M33 0.6 L0.8 15 L11 19 L26.8 7 L14.2 21 L14.2 30.6 L19 24.2 L26.2 27.8 Z" fill="#5d6475"/></svg>
</div>

<div class="abs" style="left:2798px;top:85px;width:64px;height:112px;border-radius:32px;background:linear-gradient(180deg,#a3afd8 0%,#9c9ecd 50%,#d9998f 72%,#b68ac4 100%)"></div>
<div class="abs" style="left:2801.5px;top:88.5px;width:57px;height:105px;border-radius:28.5px;background:#181a26"></div>
<svg style="left:2815px;top:108px" width="30" height="30" viewBox="0 0 30 30">
<defs><linearGradient id="wand" x1="0" y1="1" x2="1" y2="0"><stop offset="0" stop-color="#c75cf0"/><stop offset="1" stop-color="#ff9a3c"/></linearGradient></defs>
<path d="M3.5 26.5 L15 15" stroke="url(#wand)" stroke-width="3.4" stroke-linecap="round"/>
<path d="M15 1.5 V7.5" stroke="#4f8ef7" stroke-width="2.6" stroke-linecap="round"/>
<path d="M5.5 5.5 L9.6 9.6" stroke="#5b8df5" stroke-width="2.6" stroke-linecap="round"/>
<path d="M24.5 5.5 L20.6 9.4" stroke="#7aa8f5" stroke-width="2.6" stroke-linecap="round"/>
<path d="M1.5 15 H7.5" stroke="#f3a98a" stroke-width="2.6" stroke-linecap="round"/>
<path d="M22.5 15 H28.5" stroke="#f2ddd0" stroke-width="2.6" stroke-linecap="round"/>
<path d="M20.6 20.6 L24.5 24.5" stroke="#f0683a" stroke-width="2.6" stroke-linecap="round"/>
<path d="M15 22.5 V28.5" stroke="#f0808a" stroke-width="2.6" stroke-linecap="round"/>
</svg>
<div class="abs" style="left:2798px;top:146px;width:64px;text-align:center;line-height:38px;font-size:24.5px;font-weight:700;color:#ffffff;letter-spacing:-0.8px">AI</div>
<svg style="left:2815px;top:225px" width="30" height="32" viewBox="0 0 30 32"><g fill="none" stroke="#e4e6ec" stroke-width="2.5" stroke-linejoin="round"><path d="M9.6 9.2 A5.5 5.8 0 0 1 20.4 9.2"/><path d="M7.6 10.4 H22.4 V20.5 A7.4 8 0 0 1 7.6 20.5 Z"/><path d="M15 10.4 V28.4"/><path d="M7.6 18.6 H1.2"/><path d="M22.4 18.6 H28.8"/><path d="M7.6 13 L2.6 9"/><path d="M22.4 13 L27.4 9"/><path d="M8.6 24.2 L3.6 28.6"/><path d="M21.4 24.2 L26.4 28.6"/></g></svg>
<div class="abs" style="left:2798px;top:1335px;width:64px;height:64px;border-radius:14px;background:#383f52"></div>
<svg style="left:2816px;top:1353px" width="28" height="28" viewBox="0 0 28 28"><rect x="1.4" y="1.4" width="25.2" height="25.2" rx="2" fill="none" stroke="#e4e6ec" stroke-width="2.8"/><rect x="1.4" y="15" width="25.2" height="11.6" fill="#e4e6ec"/></svg>

<!-- ================= STATUS BAR ================= -->
<div class="abs" style="left:0;top:1410px;width:2868px;height:51px;background:#3a4156">
  <svg style="left:52px;top:13px" width="24" height="24" viewBox="0 0 24 24"><circle cx="12" cy="12" r="12" fill="#a3a8b8"/><path d="M7.6 7.6 L16.4 16.4 M16.4 7.6 L7.6 16.4" stroke="#3a4156" stroke-width="2.8"/></svg>
  <div class="st" style="left:84px;font-size:23px">0</div>
  <svg style="left:106px;top:13px" width="24" height="24" viewBox="0 0 24 24"><circle cx="12" cy="12" r="12" fill="#a3a8b8"/><path d="M12 5 V14" stroke="#3a4156" stroke-width="3.2"/><circle cx="12" cy="18" r="1.8" fill="#3a4156"/></svg>
  <div class="st" style="left:139px;font-size:23px">7</div>
  <div class="st" style="left:1985px">行 6，列 15</div>
  <div class="st" style="left:2141px">空格: 4</div>
  <div class="st" style="left:2246px;letter-spacing:-1px">UTF-8</div>
  <div class="st" style="left:2342px;transform:scaleX(.83);transform-origin:left center">CRLF</div>
  <div class="st" style="left:2425px">Python</div>
  <div class="st" style="left:2532px;letter-spacing:-0.15px">3.12.2 64-bit ('shims': pyenv)</div>
</div>
<div class="abs" style="left:0;top:1460px;width:2868px;height:4px;background:#1d1d20"></div>
<div class="abs" style="left:2546px;top:1392px;line-height:44px;font-size:26px;color:#eceef3;white-space:nowrap;text-shadow:0 0 3px #000,0 0 2px #000;letter-spacing:-0.5px">掘金技术社区 @ Kennem</div>
</body>
</html>
